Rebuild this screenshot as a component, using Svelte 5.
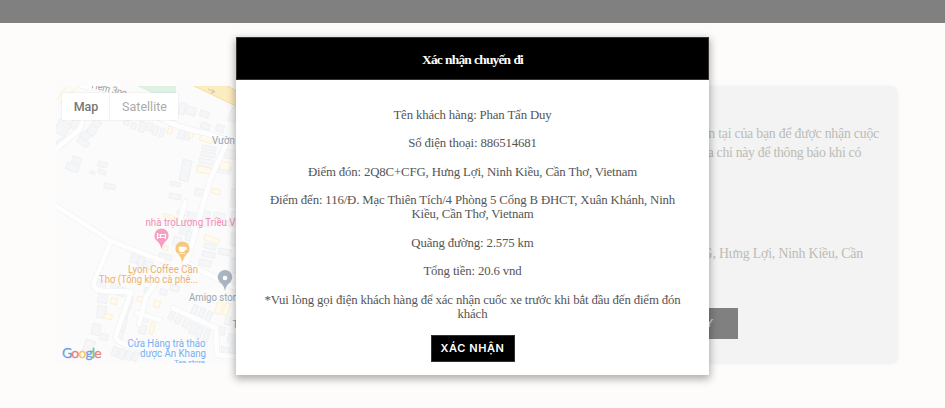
<script>
  const details = [
    ['Tên khách hàng: Phan Tấn Duy'],
    ['Số điện thoại: 886514681'],
    ['Điểm đón: 2Q8C+CFG, Hưng Lợi, Ninh Kiều, Cần Thơ, Vietnam'],
    ['Điểm đến: 116/Đ. Mạc Thiên Tích/4 Phòng 5 Cổng B ĐHCT, Xuân Khánh, Ninh', 'Kiều, Cần Thơ, Vietnam'],
    ['Quãng đường: 2.575 km'],
    ['Tổng tiền: 20.6 vnd'],
    ['*Vui lòng gọi điện khách hàng để xác nhận cuốc xe trước khi bắt đầu đến điểm đón', 'khách']
  ];
  // Buildings: x, y, width, height, rotation
  const houses = [
    [72,157,9,6,18],[66,164,13,7,20],[98,162,9,5,14],[98,170,8,4,18],[90,171,5,3,18],
    [80,131,13,8,-38],[88,126,8,9,28],[77,139,12,6,36],[70,120,10,7,-35],[56,121,13,14,30],[57,139,8,8,-32],
    [93,120,8,6,30],[124,120,5,5,15],[131,123,5,6,15],[139,122,6,10,15],[147,123,5,8,15],[153,126,5,9,15],[160,128,4,9,15],
    [178,130,6,9,15],[185,131,5,9,15],[179,103,6,11,15],[186,107,10,8,15],[200,111,9,6,20],[201,123,9,6,20],[216,125,8,7,20],
    [181,160,9,21,12],[202,146,14,4,10],[201,152,14,5,10],[199,159,14,5,10],[197,166,14,5,10],[217,166,14,7,10],[225,150,12,9,10],[230,108,7,14,20],
    [104,184,11,5,12],[170,182,10,4,10],[169,194,12,5,10],[195,189,10,7,12],[177,211,12,4,10],[175,218,10,5,10],[188,213,14,8,10],
    [200,211,10,6,10],[198,219,12,7,10],[214,213,11,7,10],[218,220,12,5,10],[180,226,10,9,12],[186,232,9,9,12],
    [173,237,8,9,12],[159,254,13,5,14],[204,244,12,5,12],[202,252,13,5,12],[199,260,12,6,12],[219,249,12,6,12],
    [131,253,7,10,14],[138,257,6,9,14],[144,261,8,8,14],[96,280,10,11,10],[98,294,9,9,8],[97,306,9,12,8],[92,324,8,11,12],[100,334,8,6,12],
    [84,340,10,13,18],[110,284,8,9,15],[117,287,8,9,15],[126,296,6,14,15],[122,307,6,13,15],[118,318,8,12,15],
    [116,331,7,8,15],[141,315,8,7,15],[139,325,7,9,15],[170,308,5,12,28],[177,311,5,13,28],[184,316,6,12,28],
    [190,323,6,11,20],[197,326,5,12,20],[204,329,5,13,20],[192,305,5,11,22],[199,308,5,12,22],[206,311,5,13,22],[225,317,6,8,10],
    [219,327,6,8,10],[228,334,7,9,10],[221,347,8,8,10],[230,343,7,10,10],[112,347,6,9,24],[119,349,6,10,24],[126,351,6,9,24],[133,352,5,9,24],
    [231,189,6,18,5],[231,212,6,15,5],[231,233,6,13,5],[230,258,7,15,5],[144,288,8,5,15],[160,289,7,6,15],[170,285,9,6,15]
  ];
  const shops = [[168,126,4,8,15],[189,130,4,8,15],[200,135,13,7,18],[197,167,14,6,12],[220,162,10,8,10],[212,189,8,5,15],[163,215,12,3,15],[204,237,15,5,18],[137,297,9,5,16],[154,301,6,6,16],[104,314,8,5,12],[111,298,6,6,12],[150,322,4,12,12],[216,302,6,12,15],[224,303,5,12,15],[163,246,5,4,10]];
  const brand = [['G', '#6f9fea'], ['o', '#ee7f76'], ['o', '#f8c84f'], ['g', '#6f9fea'], ['l', '#76c08c'], ['e', '#ee7f76']];
</script>

<div class="page">
  <div class="topbar"></div>
  <main>
    <div class="map">
      <svg width="184" height="277" viewBox="56 86 184 277">
        <rect x="56" y="86" width="184" height="277" fill="#fbfbfb" />
        <path d="M137 86h39v8h-22z" fill="#dff0e5" />
        {#each houses as [x, y, w, h, a]}
          <rect {x} {y} width={w} height={h} fill="#f5f6f8" stroke="#ebedf0" stroke-width=".7" transform="rotate({a} {x + w / 2} {y + h / 2})" />
        {/each}
        {#each shops as [x, y, w, h, a]}
          <rect {x} {y} width={w} height={h} fill="#fffaf0" stroke="#fdeecb" stroke-width=".8" transform="rotate({a} {x + w / 2} {y + h / 2})" />
        {/each}
        <g fill="none" stroke-linecap="round" stroke-linejoin="round">
          <g stroke="#eff0f2" stroke-width="6">
            <path d="M50 154L79 130Q84 122 82 110M82 86Q120 90 144 108T205 133L240 144" />
            <path d="M50 202L111 241L163 261M111 241L94 282Q92 290 103 291L131 292M185 202L179 225M210 180L187 261M226 144L210 180" />
            <path d="M131 292L116 335Q113 344 146 349M164 271L146 297L139 324M137 313L160 320M173 308L216 328L217 355L240 357M184 262L240 290" />
          </g>
          <g stroke="#fefefe" stroke-width="4.800">
            <path d="M50 154L79 130Q84 122 82 110M82 86Q120 90 144 108T205 133L240 144" />
            <path d="M50 202L111 241L163 261M111 241L94 282Q92 290 103 291L131 292M185 202L179 225M210 180L187 261M226 144L210 180" />
            <path d="M131 292L116 335Q113 344 146 349M164 271L146 297L139 324M137 313L160 320M173 308L216 328L217 355L240 357M184 262L240 290" />
          </g>
        </g>
        <path d="M190 84H224L242 94V109Z" fill="#fdecc0" stroke="#f8dc9d" />
        <path d="M208 89l6 3m-2-3l3 3-4 1" stroke="#cfc8b6" fill="none" />
        <g stroke="#fff5dc" stroke-width="2"><path d="M57 100l9-13M60 104l6-8M76 88l-5 5" /></g>
        <g class="label">
          <text x="91" y="88" transform="rotate(14 91 88)" fill="#9b9c9d" textLength="36" lengthAdjust="spacingAndGlyphs">Hẻm 3pg</text>
          <text x="212" y="144" fill="#9aa4ae" textLength="23" lengthAdjust="spacingAndGlyphs">Vườn</text>
          <text x="145.500" y="226" fill="#f58ab4" textLength="90" lengthAdjust="spacingAndGlyphs">nhà trọLương Triều V</text>
          <text x="128" y="272.500" fill="#efb070" textLength="70" lengthAdjust="spacingAndGlyphs">Lyon Coffee Cần</text>
          <text x="99" y="282.500" fill="#efb070" textLength="99" lengthAdjust="spacingAndGlyphs">Thơ (Tổng kho cà phê...</text>
          <text x="189" y="301" fill="#9aa4ae" textLength="47" lengthAdjust="spacingAndGlyphs">Amigo stor</text>
          <text x="232.500" y="327.500" fill="#9aa4ae">T</text>
          <text x="127.500" y="346.500" fill="#78aff2" textLength="78" lengthAdjust="spacingAndGlyphs">Cửa Hàng trà thảo</text>
          <text x="140" y="356.500" fill="#78aff2" textLength="66" lengthAdjust="spacingAndGlyphs">dược An Khang</text>
          <text x="174" y="364.500" fill="#78aff2" font-size="8" textLength="31">Tea store</text>
        </g>
        <path d="M161.500 249Q160 243 156 240A7.100 7.100 0 1 1 167 240Q163 243 161.500 249Z" fill="#f69fc2" />
        <path d="M157.500 233v6m0-1.500h8v1.500m0-1.500v-3h-5v3m-1.500-3v1" fill="none" stroke="#fff" stroke-width="1.200" />
        <path d="M182.300 262Q181 256 177 253A7.100 7.100 0 1 1 188 253Q184 256 182.300 262Z" fill="#f7c77c" />
        <path d="M179 247h6v2q0 3-3 3t-3-3zm6 .5h1.500v2H185M178.500 253.500h7" fill="#fff" stroke="#fff" stroke-width=".6" />
        <path d="M225 291Q224 285 219.500 282A7.300 7.300 0 1 1 230.500 282Q226 285 225 291Z" fill="#a9b6c1" />
        <circle cx="225" cy="278" r="2.300" fill="#fff" />
      </svg>
      <div class="google">{#each brand as [letter, color]}<span style:color={color}>{letter}</span>{/each}</div>
      <div class="switch"><span class="on">Map</span><span class="off">Satellite</span></div>
    </div>
    <section class="card">
      <p class="first">n tại của bạn để được nhận cuộc</p>
      <p class="second">a chỉ này để thông báo khi có</p>
      <p class="third">G, Hưng Lợi, Ninh Kiều, Cần</p>
      <div class="back">Y</div>
    </section>
  </main>
  <div class="modal">
    <h2>Xác nhận chuyến đi</h2>
    <div class="body">
      {#each details as lines}
        <p>{#each lines as line}<span>{line}</span>{/each}</p>
      {/each}
      <button>XÁC NHẬN</button>
    </div>
  </div>
</div>

<style>
  .page { position: relative; width: 945px; height: 408px; overflow: hidden; background: #fdfcfa; font-family: "Liberation Serif", serif; }
  .topbar { height: 23px; background: #808080; }
  main { display: flex; justify-content: space-between; padding: 63px 47px 0 56px; }
  .map { position: relative; width: 184px; height: 277px; }
  svg { display: block; }
  .label { font-family: Roboto, sans-serif; font-size: 10px; }
  .google { position: absolute; left: 6px; top: 258px; display: flex; font: 400 14px/18px Lato, sans-serif; letter-spacing: -.9px; -webkit-text-stroke: .3px; }
  .switch { position: absolute; left: 6px; top: 7px; display: flex; height: 27px; background: #fff; box-shadow: 0 0 2px rgba(0,0,0,.1); font: 12.500px/27px Roboto, sans-serif; }
  .on { width: 48px; padding-left: 1px; text-align: center; color: #777; font-weight: 500; border-right: 1px solid #f3f3f3; box-sizing: border-box; }
  .off { width: 68px; padding-left: 1px; box-sizing: border-box; text-align: center; color: #aaa; }
  .card { width: 398px; height: 278px; margin-top: -.5px; box-sizing: border-box; padding: 39.500px 19px 0; display: flex; flex-direction: column; align-items: flex-end; background: #f3f3f3; border-radius: 7px; box-shadow: 0 0 4px rgba(0,0,0,.04); }
  .card p { margin: 0; font-size: 13.800px; line-height: 18.500px; color: #bcbcb5; white-space: nowrap; letter-spacing: -.22px; }
  .card .second { margin-right: 18px; letter-spacing: -.3px; }
  .card .third { margin: 83px 16px 0 0; letter-spacing: -.17px; }
  .back { width: 110px; height: 31px; margin: 44.500px 141px 0 0; box-sizing: border-box; padding-right: 25px; text-align: right; background: #808080; color: #e8e4de; font: 11px/31px "Liberation Sans", sans-serif; }
  .modal { position: absolute; left: 236px; top: 37px; width: 473px; height: 338px; background: #fff; box-shadow: 0 3px 8px 1px rgba(0,0,0,.32); }
  h2 { margin: 0; height: 43px; box-sizing: border-box; border: 1px solid #333; background: #000; color: #fff; text-align: center; font-size: 13.500px; line-height: 43px; letter-spacing: -.85px; word-spacing: .6px; }
  .body { padding-top: 28px; display: flex; flex-direction: column; align-items: center; gap: 14.200px; }
  .body p { margin: 0; display: flex; flex-direction: column; align-items: center; font-size: 12.800px; line-height: 14.200px; letter-spacing: -.145px; color: #555; white-space: nowrap; }
  button { margin-top: -.5px; width: 84px; height: 27px; padding: 0; border: 1px solid #333; background: #000; color: #fff; font: 600 11px/25px Inter, sans-serif; letter-spacing: .6px; }
</style>
